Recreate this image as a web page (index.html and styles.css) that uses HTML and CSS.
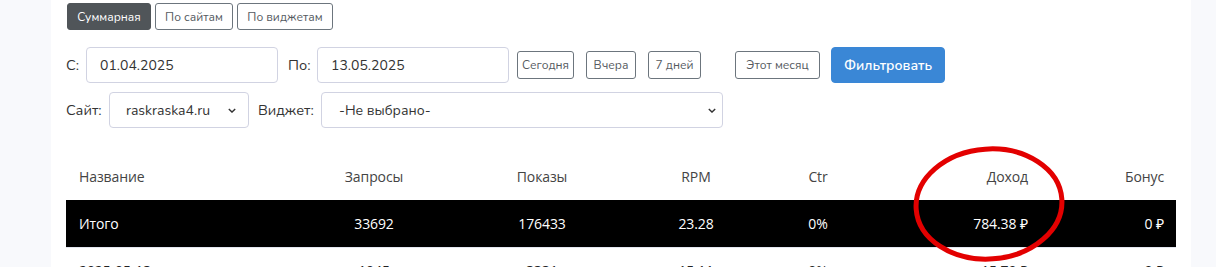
FILE: index.html
```html
<!DOCTYPE html>
<html lang="ru">
<head>
<meta charset="utf-8">
<title>Статистика</title>
<link rel="stylesheet" href="styles.css">
</head>
<body>
<div class="page">
  <div class="card">
    <div class="tabs">
      <button class="btn btn-sm btn-dark t1">Суммарная</button>
      <button class="btn btn-sm btn-outline t2">По сайтам</button>
      <button class="btn btn-sm btn-outline t3">По виджетам</button>
    </div>
    <div class="row row-dates">
      <label class="lbl lbl-s">С:</label>
      <input class="input input-date" value="01.04.2025">
      <label class="lbl lbl-po">По:</label>
      <input class="input input-date" value="13.05.2025">
      <button class="btn btn-md btn-outline b-today">Сегодня</button>
      <button class="btn btn-md btn-outline b-yest">Вчера</button>
      <button class="btn btn-md btn-outline b-week">7 дней</button>
      <button class="btn btn-md btn-outline b-month">Этот месяц</button>
      <button class="btn btn-primary">Фильтровать</button>
    </div>
    <div class="row row-sel">
      <label class="lbl lbl-site">Сайт:</label>
      <div class="select sel-site"><span>raskraska4.ru</span><svg class="chev" viewBox="0 0 10 6"><path d="M1 1l4 4 4-4" fill="none" stroke="#333" stroke-width="1.7"/></svg></div>
      <label class="lbl lbl-w">Виджет:</label>
      <div class="select sel-widget"><span>-Не выбрано-</span><svg class="chev" viewBox="0 0 10 6"><path d="M1 1l4 4 4-4" fill="none" stroke="#333" stroke-width="1.7"/></svg></div>
    </div>
    <div class="table-wrap">
      <table class="stats">
        <colgroup>
          <col class="c1"><col class="c2"><col class="c3"><col class="c4"><col class="c5"><col class="c6"><col class="c7">
        </colgroup>
        <thead>
          <tr><th class="l">Название</th><th class="m">Запросы</th><th class="m">Показы</th><th class="m">RPM</th><th class="m">Ctr</th><th>Доход</th><th>Бонус</th></tr>
        </thead>
        <tbody>
          <tr class="total"><td class="l">Итого</td><td class="m">33692</td><td class="m">176433</td><td class="m">23.28</td><td class="m">0%</td><td>784.38 ₽</td><td>0 ₽</td></tr>
          <tr><td class="l">2025-05-13</td><td class="m">1045</td><td class="m">3331</td><td class="m">15.11</td><td class="m">0%</td><td>15.79 ₽</td><td>0 ₽</td></tr>
        </tbody>
      </table>
      <svg class="circle" viewBox="0 0 160 120"><ellipse cx="80" cy="60" rx="73" ry="55" fill="none" stroke="#e30000" stroke-width="5" transform="rotate(-4 80 60)"/></svg>
    </div>
  </div>
</div>
</body>
</html>
```
FILE: styles.css
```css
* { box-sizing: border-box; }
html, body { margin: 0; padding: 0; }
body {
  background: #f8f9fc;
  font-family: "Nunito", "Open Sans", "Noto Sans", sans-serif;
  color: #333;
  height: 267px;
  overflow: hidden;
}
.page { padding-left: 51px; }
.card {
  width: 1140px;
  background: #fff;
  padding: 3px 15px 0 15px;
  height: 267px;
}
.tabs { display: flex; gap: 4px; }
.btn {
  font-family: inherit;
  border-radius: 3px;
  cursor: pointer;
  white-space: nowrap;
  padding: 0;
}
.btn-sm { height: 27px; font-size: 12px; }
.t1 { width: 84px; margin-left: 1px; }
.t2 { width: 78px; }
.t3 { width: 96px; }
.btn-dark { background: #505559; color: #fff; border: 1px solid #505559; }
.btn-outline { background: #fff; color: #555a5f; border: 1px solid #6c757d; }
.row { display: flex; align-items: center; }
.row-dates { margin-top: 17px; height: 36px; }
.row-sel { margin-top: 9px; height: 36px; }
.lbl { font-size: 14.5px; color: #333; white-space: nowrap; }
.lbl-s { width: 12px; }
.lbl-po { margin-left: 10px; width: 21px; }
.lbl-site { width: 35px; }
.input {
  font-family: inherit;
  font-size: 14px;
  color: #333;
  height: 36px;
  border: 1px solid #d1d3e2;
  border-radius: 4px;
  padding: 0 13px;
  margin-left: 8px;
}
.input-date { width: 192px; }
.btn-md { height: 28px; font-size: 12px; }
.b-today { margin-left: 8px; width: 57px; }
.b-yest { margin-left: 12px; width: 50px; }
.b-week { margin-left: 12px; width: 53px; }
.b-month { margin-left: 34px; width: 85px; }
.btn-primary {
  margin-left: 11px;
  width: 114px;
  height: 36px;
  background: #3a87d6;
  border: 1px solid #3a87d6;
  color: #fff;
  font-size: 14px;
  font-weight: 600;
  border-radius: 4px;
}
.select {
  display: flex;
  align-items: center;
  justify-content: space-between;
  height: 36px;
  border: 1px solid #d1d3e2;
  border-radius: 4px;
  font-size: 14px;
  color: #333;
  margin-left: 8px;
}
.sel-site { width: 140px; padding: 0 12px 0 16px; }
.sel-widget { width: 402px; padding: 0 6px 0 17px; }
.lbl-w { margin-left: 9px; width: 55px; }
.chev { width: 8px; height: 5px; }
.table-wrap { position: relative; margin-top: 24px; }
.stats {
  width: 1110px;
  border-collapse: collapse;
  table-layout: fixed;
  font-family: "Open Sans", "Noto Sans", sans-serif;
  font-size: 14px;
  letter-spacing: -0.1px;
}
.c1 { width: 234px; } .c2 { width: 148px; } .c3 { width: 188px; } .c4 { width: 120px; }
.c5 { width: 124px; } .c6 { width: 160px; } .c7 { width: 136px; }
.stats th, .stats td { text-align: right; padding: 0 12px 0 13px; white-space: nowrap; }
.stats th { font-weight: 400; color: #444; height: 48px; }
.stats td { height: 47px; color: #222; }
.stats .l { text-align: left; }
.stats .m { text-align: center; padding: 0; }
.stats tr.total td { background: #000; color: #fff; border-bottom: 1px solid #e3e6f0; }
.circle {
  position: absolute;
  left: 843px;
  top: -8px;
  width: 160px;
  height: 120px;
  pointer-events: none;
}
```
